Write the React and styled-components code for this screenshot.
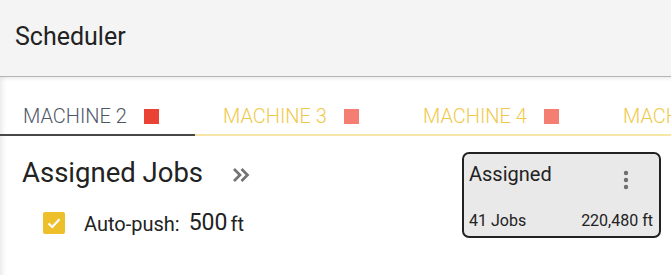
import React from "react";
import styled, { createGlobalStyle } from "styled-components";

const Global = createGlobalStyle`
  html, body { margin: 0; padding: 0; background: #fff; }
  body { font-family: Roboto, "Liberation Sans", Arial, sans-serif; color: #222; overflow: hidden; }
  * { box-sizing: border-box; }
`;

const Page = styled.div`
  width: 671px;
  height: 275px;
  overflow: hidden;
  display: flex;
  flex-direction: column;
`;

const Header = styled.header`
  height: 77px;
  background: #f4f4f4;
  border-bottom: 1px solid #b4b4b4;
  box-shadow: 0 2px 3px rgba(0, 0, 0, 0.08);
  display: flex;
  align-items: center;
  padding-left: 15px;
  position: relative;
  z-index: 1;
`;

const Title = styled.h1`
  margin: 0;
  font-size: 25px;
  font-weight: 400;
  line-height: 30px;
  color: #222;
  margin-top: -2px;
`;

const Body = styled.main`
  flex: 1;
  box-shadow: inset 7px 0 6px -6px rgba(0, 0, 0, 0.12);
`;

const TabBar = styled.nav`
  display: flex;
  height: 59px;
  align-items: flex-end;
  overflow: hidden;
  margin-left: -5px;
  white-space: nowrap;
`;

const Tab = styled.div`
  flex: 0 0 200px;
  display: flex;
  align-items: center;
  gap: 17px;
  padding: 0 0 8px 28px;
  border-bottom: 2px solid ${(p) => (p.$active ? "#484848" : "#f6e6a8")};
  font-size: 20px;
  line-height: 20px;
  font-weight: 300;
  color: ${(p) => (p.$active ? "#4f5766" : "#f0c94c")};
  text-transform: uppercase;
`;

const Swatch = styled.span`
  width: 15px;
  height: 15px;
  flex: 0 0 15px;
  background: ${(p) => p.$color};
`;

const Content = styled.section`
  display: flex;
  justify-content: space-between;
  align-items: flex-start;
  padding: 16px 10px 0 22px;
`;

const LeftCol = styled.div`
  display: flex;
  flex-direction: column;
  padding-top: 5px;
`;

const TitleRow = styled.div`
  display: flex;
  align-items: center;
  gap: 29px;
`;

const SectionTitle = styled.h2`
  margin: 0;
  font-size: 27.5px;
  font-weight: 400;
  line-height: 32px;
  color: #222;
`;

const Expand = styled.svg`
  width: 18px;
  height: 16px;
  margin-top: 4px;
`;

const CheckRow = styled.label`
  display: flex;
  align-items: center;
  margin-top: 22px;
  margin-left: 21px;
  height: 24px;
`;

const Box = styled.span`
  width: 22px;
  height: 22px;
  border-radius: 2px;
  background: #ecbf2b;
  display: flex;
  align-items: center;
  justify-content: center;
  margin-right: 19px;
`;

const Label = styled.span`
  font-size: 20px;
  line-height: 24px;
  color: #222;
  margin-top: 2px;
`;

const Amount = styled.span`
  font-size: 23px;
  line-height: 24px;
  margin-left: 9px;
  color: #222;
`;

const Unit = styled.span`
  font-size: 20px;
  line-height: 24px;
  margin-left: 3px;
  margin-top: 2px;
`;

const Card = styled.div`
  width: 199px;
  height: 86px;
  border: 2px solid #222;
  border-radius: 7px;
  background: #e9e9e9;
  display: flex;
  flex-direction: column;
  justify-content: space-between;
  padding: 8px 6px 6px 5px;
`;

const CardHead = styled.div`
  display: flex;
  justify-content: space-between;
  align-items: flex-start;
`;

const CardTitle = styled.span`
  font-size: 20px;
  line-height: 24px;
  color: #222;
`;

const Kebab = styled.svg`
  width: 6px;
  height: 20px;
  margin-top: 8px;
  margin-right: 24px;
`;

const CardFoot = styled.div`
  display: flex;
  justify-content: space-between;
  font-size: 16px;
  line-height: 18px;
  color: #222;
`;

export default function App() {
  const tabs = [
    { name: "Machine 2", color: "#ea4335", active: true },
    { name: "Machine 3", color: "#f47e72" },
    { name: "Machine 4", color: "#f47e72" },
    { name: "Machine 5", color: "#f47e72" },
  ];
  return (
    <>
      <Global />
      <Page>
        <Header>
          <Title>Scheduler</Title>
        </Header>
        <Body>
          <TabBar>
            {tabs.map((t) => (
              <Tab key={t.name} $active={t.active}>
                {t.name}
                <Swatch $color={t.color} />
              </Tab>
            ))}
          </TabBar>
          <Content>
            <LeftCol>
              <TitleRow>
                <SectionTitle>Assigned Jobs</SectionTitle>
                <Expand viewBox="0 0 18 16">
                  <path d="M2 2 L8 8 L2 14 M9.5 2 L15.5 8 L9.5 14" fill="none" stroke="#737373" strokeWidth="2.7" />
                </Expand>
              </TitleRow>
              <CheckRow>
                <Box>
                  <svg width="16" height="16" viewBox="0 0 16 16">
                    <path d="M2.5 8.5 L6.3 12 L13.5 4.2" fill="none" stroke="#fff" strokeWidth="2.2" />
                  </svg>
                </Box>
                <Label>Auto-push:</Label>
                <Amount>500</Amount>
                <Unit>ft</Unit>
              </CheckRow>
            </LeftCol>
            <Card>
              <CardHead>
                <CardTitle>Assigned</CardTitle>
                <Kebab viewBox="0 0 6 20">
                  <circle cx="3" cy="3" r="2.2" fill="#6f6f6f" />
                  <circle cx="3" cy="10" r="2.2" fill="#6f6f6f" />
                  <circle cx="3" cy="17" r="2.2" fill="#6f6f6f" />
                </Kebab>
              </CardHead>
              <CardFoot>
                <span>41 Jobs</span>
                <span>220,480 ft</span>
              </CardFoot>
            </Card>
          </Content>
        </Body>
      </Page>
    </>
  );
}
